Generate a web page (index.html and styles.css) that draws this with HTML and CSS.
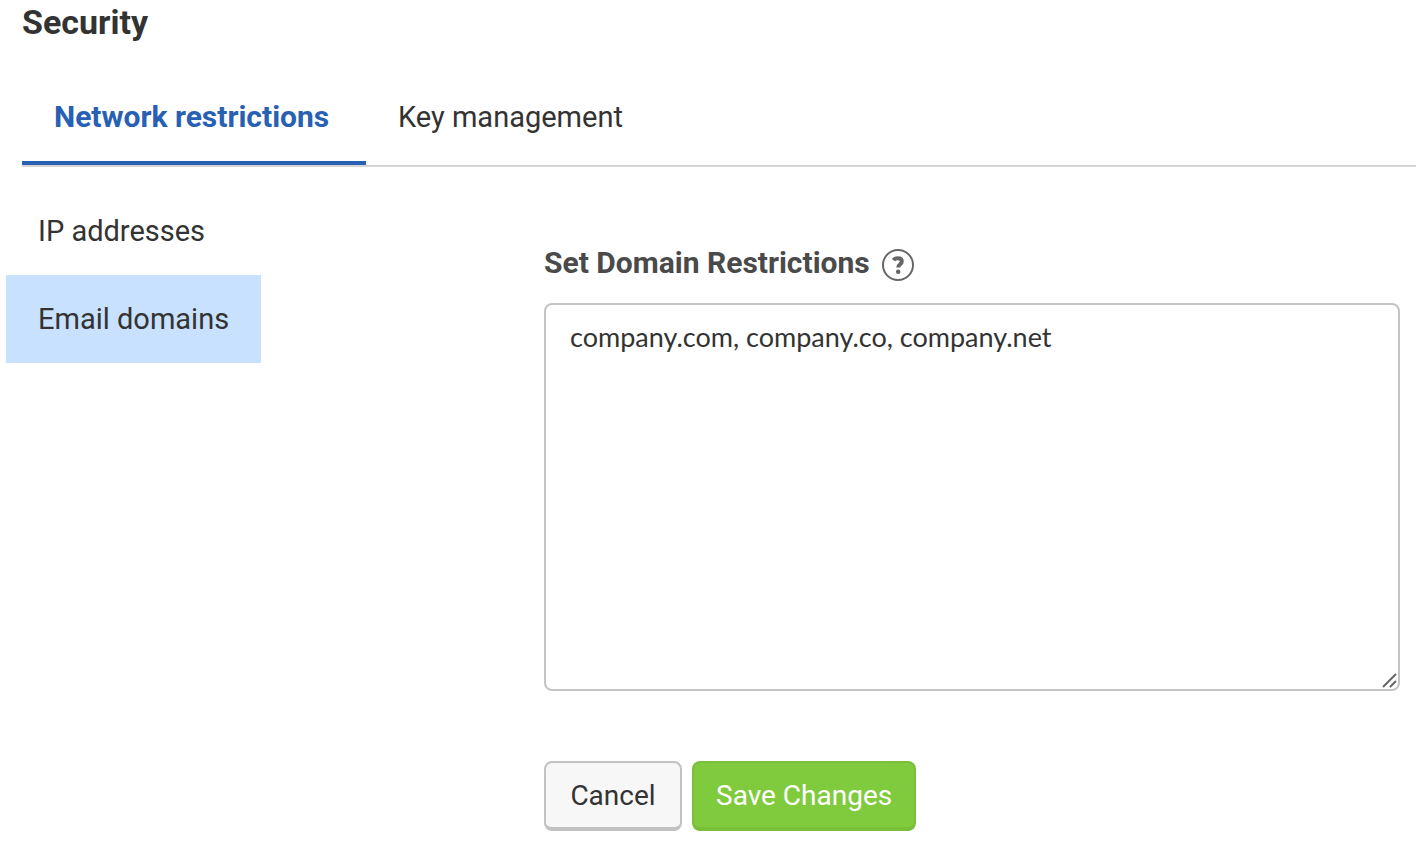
FILE: index.html
```html
<!DOCTYPE html>
<html lang="en">

<head>
    <meta charset="UTF-8" />
    <meta name="viewport" content="width=device-width, initial-scale=1.0" />
    <title>Security</title>
    <link rel="stylesheet" href="styles.css">
</head>

<body>
    <h1 class="page-title">Security</h1>

    <nav class="tabs">
        <a class="tab active" href="#network">Network restrictions</a>
        <a class="tab" href="#keys">Key management</a>
    </nav>

    <div class="layout">
        <nav class="side-menu">
            <a class="side-link" href="#ip">IP addresses</a>
            <a class="side-link selected" href="#email">Email domains</a>
        </nav>

        <form class="domain-form">
            <div class="form-heading">
                <label for="domains">Set Domain Restrictions</label>
                <button type="button" class="help-btn" aria-label="Help">
                    <svg viewBox="0 0 32 32">
                        <circle cx="16" cy="16" r="15" />
                        <path d="M11.400 11.200C12.400 9.800 14 9.200 15.700 9.200C18.200 9.200 19.800 10.400 19.800 12.400C19.800 15.200 16.200 15.200 16.200 18.600" />
                        <rect x="14" y="20.600" width="4.400" height="4.400" rx="2" />
                    </svg>
                </button>
            </div>

            <div class="textarea-wrap">
                <textarea id="domains" spellcheck="false">company.com, company.co, company.net</textarea>
                <svg class="grip" viewBox="0 0 16 16">
                    <path d="M2 15L15 2M9 15L15 9" />
                </svg>
            </div>

            <div class="actions">
                <button type="button" class="btn">Cancel</button>
                <button type="submit" class="btn btn-save">Save Changes</button>
            </div>
        </form>
    </div>
</body>

</html>
```
FILE: styles.css
```css
* {
    box-sizing: border-box;
}

body {
    margin: 0;
    background: white;
    color: #333;
    font-family: Roboto, sans-serif;
    font-size: 29px;
    line-height: 40px;
}

a {
    color: inherit;
    text-decoration: none;
}

.page-title {
    margin: 0 0 28px 22px;
    font-size: 34px;
    line-height: 44px;
}

.tabs {
    display: flex;
    margin-left: 22px;
    border-bottom: 2px solid #d5d5d5;
}

.tab {
    padding: 25px 32px 24px;
    border-bottom: 4px solid transparent;
}

.tab.active {
    min-width: 344px;
    color: #2860b4;
    font-size: 30px;
    font-weight: bold;
    border-bottom-color: #2860b4;
}

.layout {
    display: flex;
    padding: 20px 16px 20px 6px;
}

.side-menu {
    display: flex;
    flex-direction: column;
    align-items: flex-start;
    flex: 0 0 538px;
}

.side-link {
    padding: 24px 32px;
}

.side-link.selected {
    background: #c8e1fe;
}

.domain-form {
    flex: 1;
    padding-top: 56px;
}

.form-heading {
    display: flex;
    align-items: center;
    gap: 12px;
    margin-bottom: 20px;
    color: #4a4a4a;
    font-size: 30px;
    font-weight: bold;
}

.help-btn {
    width: 32px;
    height: 32px;
    margin-top: 4px;
    padding: 0;
    border: none;
    background: none;
    cursor: pointer;
}

.help-btn svg {
    display: block;
    fill: none;
    stroke: #666;
    stroke-width: 2;
}

.help-btn path {
    stroke-width: 4;
}

.help-btn rect {
    fill: #666;
    stroke: none;
}

.textarea-wrap {
    position: relative;
}

textarea {
    display: block;
    width: 100%;
    height: 388px;
    padding: 12px 24px;
    border: 2px solid #c4c4c4;
    border-radius: 8px;
    color: #333;
    font-family: Lato, sans-serif;
    font-size: 27px;
    line-height: 40px;
    resize: none;
}

.grip {
    position: absolute;
    right: 3px;
    bottom: 3px;
    width: 16px;
    height: 16px;
    fill: none;
    stroke: #666;
    stroke-width: 2;
    pointer-events: none;
}

.actions {
    display: flex;
    gap: 10px;
    margin-top: 70px;
}

.btn {
    min-width: 138px;
    height: 70px;
    padding: 0 22px;
    border: 2px solid #c2c2c2;
    border-bottom-width: 4px;
    border-radius: 8px;
    background: #f7f7f7;
    color: #333;
    font-family: inherit;
    font-size: 28px;
    cursor: pointer;
}

.btn-save {
    border-color: #79bf3a;
    background: #80cb3d;
    color: white;
}
```
